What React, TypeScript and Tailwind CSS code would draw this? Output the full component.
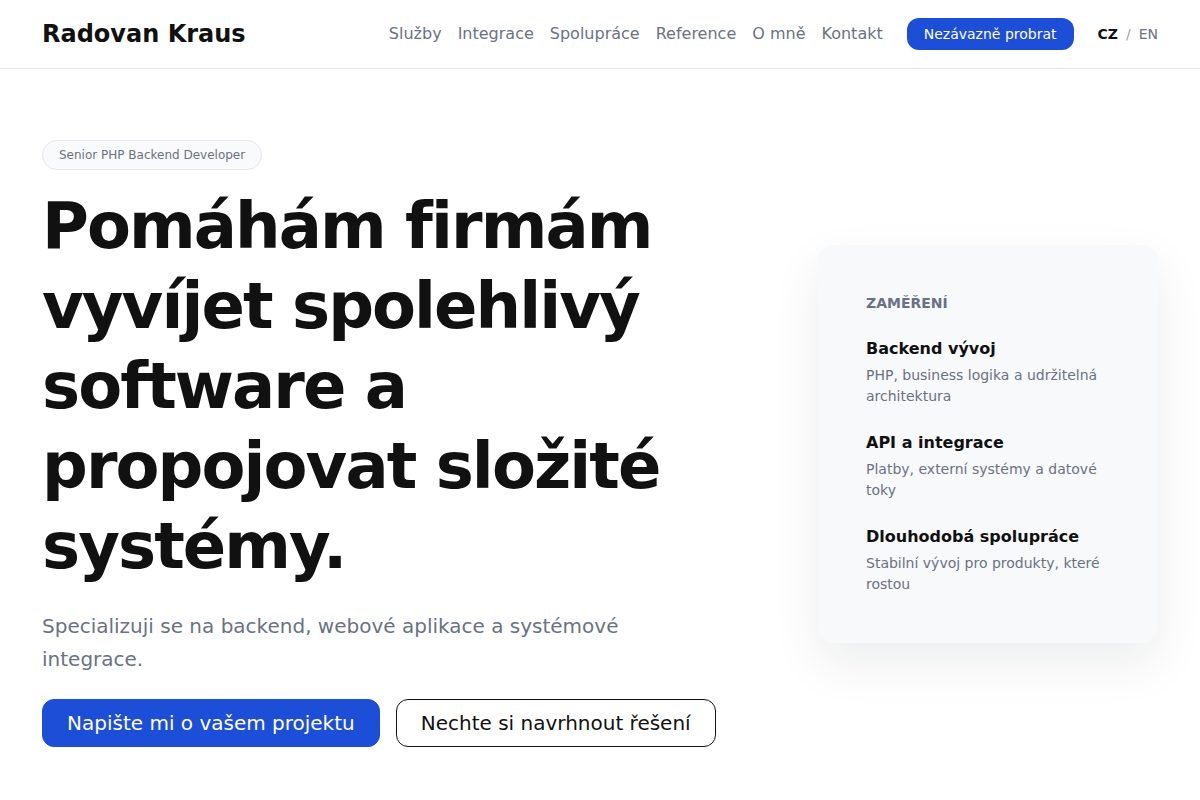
import React from "react";

const NAV = ["Služby", "Integrace", "Spolupráce", "Reference", "O mně", "Kontakt"];

const FOCUS = [
  { title: "Backend vývoj", text: "PHP, business logika a udržitelná architektura" },
  { title: "API a integrace", text: "Platby, externí systémy a datové toky" },
  { title: "Dlouhodobá spolupráce", text: "Stabilní vývoj pro produkty, které rostou" },
];

export default function App() {
  return (
    <div className="min-h-screen bg-white font-['DejaVu_Sans',sans-serif] text-[#111]">
      <header className="h-[69px] border-b border-gray-200">
        <div className="flex h-full items-center justify-between px-[42px]">
          <div className="text-2xl font-bold text-[#111]">Radovan Kraus</div>
          <div className="flex items-center gap-6">
            <nav className="flex items-center gap-4">
              {NAV.map((item) => (
                <a key={item} href="#" className="text-base text-gray-500">
                  {item}
                </a>
              ))}
            </nav>
            <a href="#" className="rounded-xl bg-[#1d4ed8] px-[17px] py-1.5 text-sm text-white">
              Nezávazně probrat
            </a>
            <div className="flex items-center gap-2 text-sm">
              <span className="font-bold text-[#111]">CZ</span>
              <span className="text-gray-400">/</span>
              <span className="text-gray-500">EN</span>
            </div>
          </div>
        </div>
      </header>

      <main className="px-[42px] pt-[71px] pb-16">
        <div className="grid grid-cols-[minmax(0,1fr)_340px] items-center gap-16">
          <div>
            <span className="inline-block rounded-full border border-gray-200 bg-gray-50 px-4 py-1.5 text-xs text-gray-500">
              Senior PHP Backend Developer
            </span>
            <h1 className="mt-4 text-[64px] font-bold leading-[80px] tracking-[-0.03em] text-[#111]">
              Pomáhám firmám vyvíjet spolehlivý software a propojovat složité systémy.
            </h1>
            <p className="mt-6 max-w-2xl text-xl leading-relaxed text-gray-500">
              Specializuji se na backend, webové aplikace a systémové integrace.
            </p>
            <div className="mt-6 flex gap-4">
              <a
                href="#"
                className="flex h-12 items-center rounded-xl border border-[#1d4ed8] bg-[#1d4ed8] px-6 text-xl text-white"
              >
                Napište mi o vašem projektu
              </a>
              <a
                href="#"
                className="flex h-12 items-center rounded-xl border border-[#111] bg-white px-6 text-xl text-[#111]"
              >
                Nechte si navrhnout řešení
              </a>
            </div>
          </div>

          <aside className="rounded-2xl bg-[#f8f9fb] p-12 shadow-[0_20px_50px_rgba(15,23,42,0.08)]">
            <div className="mb-6 text-sm font-bold uppercase text-gray-500">Zaměření</div>
            <div className="flex flex-col gap-6">
              {FOCUS.map((f) => (
                <div key={f.title}>
                  <h3 className="text-base font-bold leading-6 text-[#111]">{f.title}</h3>
                  <p className="mt-1 text-sm leading-normal text-gray-500">{f.text}</p>
                </div>
              ))}
            </div>
          </aside>
        </div>
      </main>
    </div>
  );
}
